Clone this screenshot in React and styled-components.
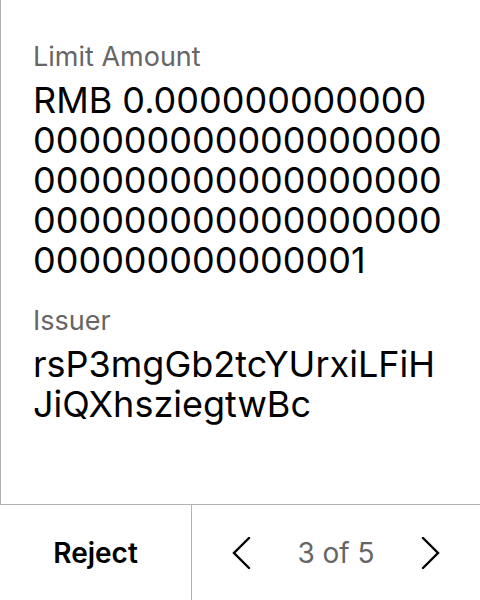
import React from 'react';
import styled, { createGlobalStyle } from 'styled-components';

const GlobalStyle = createGlobalStyle`
  html, body {
    margin: 0;
    padding: 0;
    background: #ffffff;
  }
  body {
    font-family: Inter, "Noto Sans", sans-serif;
    color: #000000;
  }
`;

const Screen = styled.div`
  width: 480px;
  height: 600px;
  display: flex;
  flex-direction: column;
  box-sizing: border-box;
`;

const Details = styled.div`
  flex: 1;
  border-left: 1px solid #b3b3b3;
  padding: 40px 32px 0 32px;
  display: flex;
  flex-direction: column;
  gap: 24px;
`;

const Field = styled.div`
  display: flex;
  flex-direction: column;
  gap: 6px;
`;

const Label = styled.div`
  font-size: 27px;
  line-height: 34px;
  color: #666666;
`;

const Value = styled.div`
  font-size: 36px;
  line-height: 40px;
  color: #000000;
  word-break: break-all;
`;

const Footer = styled.div`
  height: 96px;
  border-top: 1px solid #b3b3b3;
  display: flex;
  box-sizing: border-box;
`;

const RejectButton = styled.button`
  width: 192px;
  border: none;
  border-right: 1px solid #b3b3b3;
  background: none;
  font-family: Inter, "Noto Sans", sans-serif;
  font-size: 28px;
  font-weight: 600;
  color: #000000;
  padding: 0;
  cursor: pointer;
`;

const Pager = styled.div`
  flex: 1;
  display: flex;
  align-items: center;
  justify-content: space-between;
  padding: 0 26px;
`;

const NavButton = styled.button`
  width: 48px;
  height: 48px;
  border: none;
  background: none;
  padding: 0;
  display: flex;
  align-items: center;
  justify-content: center;
  cursor: pointer;
`;

const PageCount = styled.span`
  font-size: 28px;
  color: #666666;
`;

const Chevron = ({ dir }) => (
  <svg width="20" height="32" viewBox="0 0 20 32" fill="none">
    <polyline
      points={dir === 'left' ? '17,1 2,16 17,31' : '3,1 18,16 3,31'}
      stroke="#000000"
      strokeWidth="2.4"
      strokeLinecap="round"
      strokeLinejoin="miter"
    />
  </svg>
);

const amount = 'RMB 0.' + '0'.repeat(80) + '1';

const App = () => (
  <>
    <GlobalStyle />
    <Screen>
      <Details>
        <Field>
          <Label>Limit Amount</Label>
          <Value>{amount}</Value>
        </Field>
        <Field>
          <Label>Issuer</Label>
          <Value>rsP3mgGb2tcYUrxiLFiHJiQXhsziegtwBc</Value>
        </Field>
      </Details>
      <Footer>
        <RejectButton>Reject</RejectButton>
        <Pager>
          <NavButton aria-label="Previous">
            <Chevron dir="left" />
          </NavButton>
          <PageCount>3 of 5</PageCount>
          <NavButton aria-label="Next">
            <Chevron dir="right" />
          </NavButton>
        </Pager>
      </Footer>
    </Screen>
  </>
);

export default App;
